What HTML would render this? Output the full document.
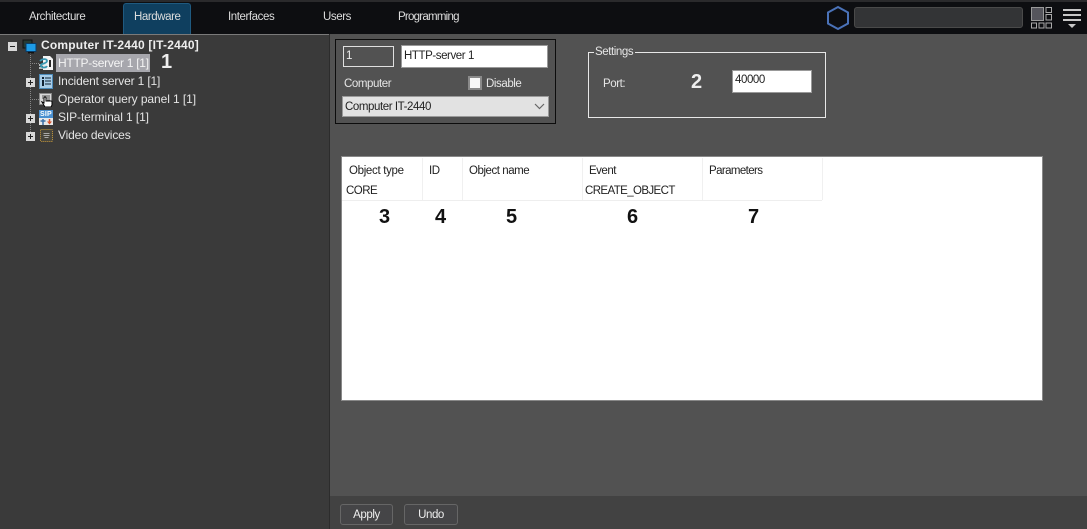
<!DOCTYPE html>
<html><head><meta charset="utf-8">
<style>
html,body{margin:0;padding:0;width:1087px;height:529px;overflow:hidden;background:#525252}
body{position:relative;font-family:"Liberation Sans",sans-serif;font-size:11.5px;letter-spacing:-.42px;color:#eee}
.a{position:absolute;white-space:nowrap}
.box{position:absolute;box-sizing:border-box}
.tab{position:absolute;top:10.500px;color:#ddd;font-size:11.5px;line-height:12px;white-space:nowrap;letter-spacing:-.42px}
.tree{position:absolute;left:58px;color:#e4e4e4;font-size:12px;line-height:18px;white-space:nowrap}
.num{position:absolute;font-weight:bold;font-size:20px;line-height:20px;white-space:nowrap;letter-spacing:0}
.k{color:#111}
.pm{position:absolute;width:9px;height:9px;background:#d8d8d8;color:#222}
.pm:before{content:"";position:absolute;left:2px;top:4px;width:5px;height:1px;background:#222}
.pm.p:after{content:"";position:absolute;left:4px;top:2px;width:1px;height:5px;background:#222}
.dv{position:absolute;top:158px;width:1px;height:42px;background:#f0f0f0}
.t{position:absolute;color:#222;font-size:11.5px;line-height:14px;white-space:nowrap;letter-spacing:-.5px}
.btn{position:absolute;top:504px;height:21px;box-sizing:border-box;border:1px solid #666;border-radius:3px;background:#454547;color:#eee;text-align:center;line-height:20px;font-size:11.5px}
</style></head><body>
<!-- top bar -->
<div class="box" style="left:0;top:0;width:1087px;height:34px;background:#0d0e11"></div>
<div class="box" style="left:0;top:0;width:1087px;height:2px;background:#2a2a2c"></div>
<div class="box" style="left:123px;top:3px;width:68px;height:31px;background:#0f3f5f;border:1px solid #1f5a80;border-bottom:0;border-radius:3px 3px 0 0"></div>
<div class="tab" style="left:29px">Architecture</div>
<div class="tab" style="left:134px">Hardware</div>
<div class="tab" style="left:228px">Interfaces</div>
<div class="tab" style="left:323px">Users</div>
<div class="tab" style="left:398px;letter-spacing:-.75px">Programming</div>
<svg class="a" style="left:826px;top:5px" width="24" height="26" viewBox="0 0 24 26"><path d="M12 2 L22 7.5 V18.5 L12 24 L2 18.5 V7.5 Z" fill="none" stroke="#4a72b8" stroke-width="2"/></svg>
<div class="box" style="left:854px;top:7px;width:169px;height:21px;background:#333436;border:1px solid #4a4a4a;border-radius:3px"></div>
<svg class="a" style="left:1031px;top:7px" width="22" height="22" viewBox="0 0 22 22">
<rect x=".5" y=".5" width="12" height="13" fill="#55555c" stroke="#999"/>
<g fill="none" stroke="#aaa"><rect x="15" y=".5" width="5.5" height="5"/><rect x="15" y="7.5" width="5.5" height="5.5"/><rect x=".5" y="16" width="5" height="5"/><rect x="8" y="16" width="5" height="5"/><rect x="15" y="16" width="5.5" height="5"/></g></svg>
<svg class="a" style="left:1062px;top:8px" width="20" height="21" viewBox="0 0 20 21"><g fill="#c8c8c8"><rect x="1" y="1" width="18" height="2"/><rect x="1" y="6" width="18" height="2"/><rect x="1" y="11" width="18" height="2"/><path d="M6 16h8l-4 4z"/></g></svg>
<!-- left panel -->
<div class="box" style="left:0;top:34px;width:330px;height:495px;background:#3a3a3a;border-top:1px solid #7a7a7a"></div>
<div class="box" style="left:329px;top:34px;width:1px;height:495px;background:#2c2c2c"></div>
<!-- tree lines -->
<div class="box" style="left:30px;top:53px;width:0;height:83px;border-left:1px dotted #888"></div>
<div class="box" style="left:30px;top:63px;width:9px;height:0;border-top:1px dotted #888"></div>
<div class="box" style="left:30px;top:99px;width:9px;height:0;border-top:1px dotted #888"></div>
<div class="pm" style="left:8px;top:42px"></div>
<div class="pm p" style="left:26px;top:78px"></div>
<div class="pm p" style="left:26px;top:114px"></div>
<div class="pm p" style="left:26px;top:132px"></div>
<!-- tree icons -->
<svg class="a" style="left:22px;top:39px" width="15" height="15" viewBox="0 0 15 15"><rect x="1" y="1" width="9" height="8" fill="#263a34" stroke="#111"/><rect x="4" y="4.500" width="10" height="8" fill="#1d9be6" stroke="#0a3c66"/><rect x="6" y="13" width="6" height="1.500" fill="#111"/></svg>
<svg class="a" style="left:38px;top:56px" width="15" height="14" viewBox="0 0 15 14"><path d="M5 0h7l3 3v11H5z" fill="#f4f4f4"/><path d="M1 9h7M1 12h8" stroke="#dfe8ea" stroke-width="1.500"/><path d="M2 5c3-3 7-2 7 0 0 3-7 2-6 5 1 2 5 2 6 0" fill="none" stroke="#3a98b2" stroke-width="1.800"/><path d="M12 4v7" stroke="#111" stroke-width="1.800"/></svg>
<svg class="a" style="left:39px;top:74px" width="14" height="15" viewBox="0 0 14 15"><rect x=".5" y=".5" width="13" height="14" fill="#a9cde8" stroke="#4d8ab8"/><rect x="3" y="3" width="2" height="2" fill="#123"/><rect x="3" y="6" width="2" height="6" fill="#123"/><path d="M6 4h6M6 7h6M6 10h6" stroke="#123"/></svg>
<svg class="a" style="left:39px;top:93px" width="14" height="14" viewBox="0 0 14 14"><rect x=".5" y=".5" width="12" height="11" fill="#d8d8d8" stroke="#888"/><path d="M3 3h8M3 5h8M8 7h3" stroke="#555"/><path d="M3 9l2 1V5a1 1 0 0 1 2 0V8h5a1 1 0 0 1 1 1v3l-1 2H6z" fill="#fff" stroke="#000"/></svg>
<svg class="a" style="left:39px;top:110px" width="14" height="15" viewBox="0 0 14 15"><rect width="14" height="8" fill="#4a90d0"/><rect y="8" width="14" height="7" fill="#e8e8e8"/><path d="M4 9v6M1.500 11h5" stroke="#3a6ea5" stroke-width="1.500"/><path d="M10.500 9v3" stroke="#d8502a" stroke-width="1.500"/><path d="M8 11.500h5l-2.500 3z" fill="#d8502a"/></svg>
<div class="a" style="left:40px;top:110.500px;font-size:7px;line-height:7px;font-weight:bold;color:#fff;letter-spacing:.2px">SIP</div>
<svg class="a" style="left:39px;top:128px" width="15" height="15" viewBox="0 0 15 15"><rect x="1.500" y="1.500" width="12" height="12" rx="1" fill="#47453c" stroke="#c89a3c" stroke-dasharray="1 1"/><path d="M4.500 5.500h6M4.500 7.500h6M5.500 9.500h4" stroke="#aaa"/></svg>
<div class="box" style="left:56px;top:54px;width:94px;height:18px;background:#a7a7ad"></div>
<div class="tree" style="left:41px;top:36px;font-weight:bold;color:#eee;letter-spacing:.2px">Computer IT-2440 [IT-2440]</div>
<div class="tree" style="top:54px;color:#f4f4f4;letter-spacing:-.27px">HTTP-server 1 [1]</div>
<div class="tree" style="top:72px;letter-spacing:-.15px">Incident server 1 [1]</div>
<div class="tree" style="top:90px;letter-spacing:-.08px">Operator query panel 1 [1]</div>
<div class="tree" style="top:108px;letter-spacing:-.1px">SIP-terminal 1 [1]</div>
<div class="tree" style="top:126px;letter-spacing:-.15px">Video devices</div>
<div class="num" style="left:161px;top:52px;color:#eee">1</div>
<!-- object panel -->
<div class="box" style="left:335px;top:39px;width:221px;height:85px;border:1px solid #0c0c0c"></div>
<div class="box" style="left:343px;top:46px;width:51px;height:21px;border:1px solid #e0e0e0;background:#525252;color:#eee;padding-left:2px;line-height:19px">1</div>
<div class="box" style="left:401px;top:45px;width:147px;height:23px;background:#fff;border:1px solid #999;color:#222;padding-left:2px;line-height:20px">HTTP-server 1</div>
<div class="a" style="left:344px;top:76.500px;color:#e6e6e6;line-height:14px">Computer</div>
<div class="box" style="left:468px;top:76px;width:14px;height:14px;background:#f8f8f8;border:2px solid #8a8a8a"></div>
<div class="a" style="left:486px;top:76.500px;color:#e6e6e6;line-height:14px">Disable</div>
<div class="box" style="left:342px;top:96px;width:207px;height:21px;background:#e2e2e2;border:1px solid #9a9a9a;color:#222;padding-left:2px;line-height:20px">Computer IT-2440</div>
<svg class="a" style="left:534px;top:103px" width="11" height="7" viewBox="0 0 11 7"><path d="M1 1l4.500 4.500L10 1" fill="none" stroke="#666" stroke-width="1.200"/></svg>
<!-- settings -->
<div class="box" style="left:588px;top:52px;width:238px;height:66px;border:1px solid #e8e8e8"></div>
<div class="a" style="left:594px;top:45px;background:#525252;padding:0 2px 0 1px;color:#e6e6e6;line-height:14px">Settings</div>
<div class="a" style="left:603px;top:76.500px;color:#e6e6e6;line-height:14px">Port:</div>
<div class="num" style="left:691px;top:72px;color:#eee">2</div>
<div class="box" style="left:732px;top:70px;width:80px;height:23px;background:#fff;border:1px solid #999;color:#222;padding-left:2px;line-height:18px">40000</div>
<!-- table -->
<div class="box" style="left:341px;top:156px;width:702px;height:245px;background:#fff;border:1px solid #888"></div>
<div class="box" style="left:342px;top:200px;width:480px;height:1px;background:#eee"></div>
<div class="dv" style="left:422px"></div><div class="dv" style="left:462px"></div><div class="dv" style="left:582px"></div><div class="dv" style="left:702px"></div><div class="dv" style="left:822px"></div>
<div class="t" style="left:349px;top:163.500px;letter-spacing:-.32px">Object type</div>
<div class="t" style="left:429px;top:163.500px">ID</div>
<div class="t" style="left:469px;top:163.500px;letter-spacing:-.45px">Object name</div>
<div class="t" style="left:589px;top:163.500px">Event</div>
<div class="t" style="left:709px;top:163.500px;letter-spacing:-.6px">Parameters</div>
<div class="t" style="left:346px;top:184px">CORE</div>
<div class="t" style="left:585px;top:184px;letter-spacing:-.6px">CREATE_OBJECT</div>
<div class="num k" style="left:379px;top:207px">3</div>
<div class="num k" style="left:435px;top:207px">4</div>
<div class="num k" style="left:506px;top:207px">5</div>
<div class="num k" style="left:627px;top:207px">6</div>
<div class="num k" style="left:748px;top:207px">7</div>
<!-- bottom bar -->
<div class="box" style="left:330px;top:496px;width:757px;height:33px;background:#424242"></div>
<div class="btn" style="left:340px;width:53px">Apply</div>
<div class="btn" style="left:404px;width:54px">Undo</div>
</body></html>
